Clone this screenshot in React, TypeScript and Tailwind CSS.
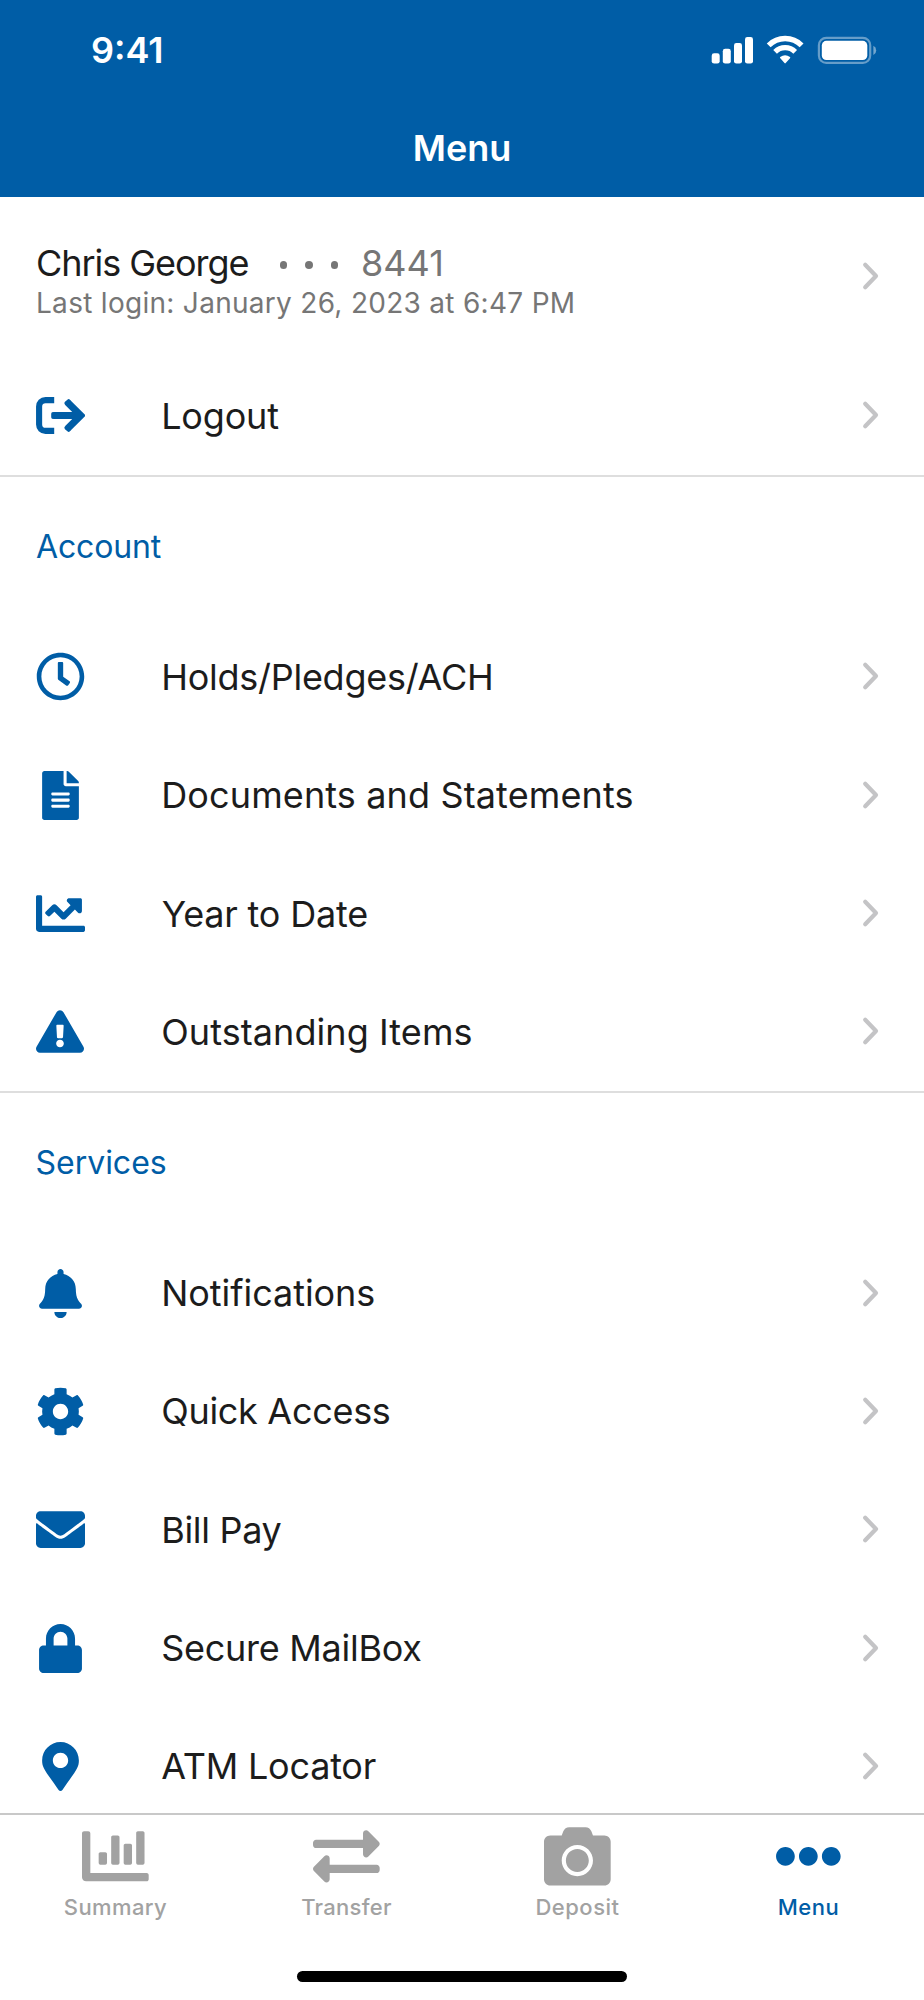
import type { ReactNode } from 'react';
import {
  FaBell,
  FaCamera,
  FaChartBar,
  FaChartLine,
  FaCog,
  FaEllipsisH,
  FaEnvelope,
  FaExchangeAlt,
  FaExclamationTriangle,
  FaFileAlt,
  FaLock,
  FaMapMarkerAlt,
  FaRegClock,
} from 'react-icons/fa';

type Item = { label: string; icon: ReactNode; text?: string };

function LogoutIcon() {
  return (
    <svg viewBox="0 0 49 49" className="size-[49px]" fill="none" stroke="currentColor">
      <path d="M18.2 9.1H9.5C5.8 9.1 3.1 11.8 3.1 15.5V33.5C3.1 37.2 5.8 39.9 9.5 39.9H18.2" strokeWidth="6.1" />
      <path d="M17.2 24.5H42" strokeWidth="7" />
      <path d="M31.4 11.2L44.7 24.5L31.4 37.8" strokeWidth="7" strokeLinejoin="miter" />
      <path d="M17 22.8V26.2M30.2 12.2L32.6 10M30.2 36.8L32.6 39" strokeWidth="3.6" strokeLinecap="round" />
    </svg>
  );
}

function Chevron() {
  return (
    <svg viewBox="0 0 18 30" className="mr-[45.5px] mb-px h-[30px] w-[18px] shrink-0 text-[#c4c4c6]" fill="none" stroke="currentColor">
      <path d="M4.2 3.8L15 15L4.2 26.2" strokeWidth="4.2" strokeLinecap="round" strokeLinejoin="round" />
    </svg>
  );
}

const accountItems: Item[] = [
  { label: 'Holds/Pledges/ACH', icon: <FaRegClock />, text: 'tracking-[-0.26px]' },
  { label: 'Documents and Statements', icon: <FaFileAlt />, text: 'tracking-[0.13px]' },
  { label: 'Year to Date', icon: <FaChartLine />, text: 'pl-[0.5px] tracking-[-0.2px]' },
  { label: 'Outstanding Items', icon: <FaExclamationTriangle className="h-[43px] w-12" />, text: 'tracking-[0.08px]' },
];

const serviceItems: Item[] = [
  { label: 'Notifications', icon: <FaBell />, text: 'tracking-[-0.05px]' },
  { label: 'Quick Access', icon: <FaCog />, text: 'tracking-[-0.3px]' },
  { label: 'Bill Pay', icon: <FaEnvelope />, text: 'tracking-[-0.3px]' },
  { label: 'Secure MailBox', icon: <FaLock />, text: 'tracking-[-0.27px]' },
  { label: 'ATM Locator', icon: <FaMapMarkerAlt />, text: 'tracking-[-0.22px]' },
];

const tabs = [
  { label: 'Summary', icon: <FaChartBar />, active: false, text: 'tracking-[0.4px]' },
  { label: 'Transfer', icon: <FaExchangeAlt />, active: false, text: 'tracking-[0.3px]' },
  { label: 'Deposit', icon: <FaCamera />, active: false, text: 'tracking-[0.5px]' },
  { label: 'Menu', icon: <FaEllipsisH />, active: true, text: 'tracking-[0.5px]' },
];

function Row({ label, icon, text = '' }: Item) {
  return (
    <li className="flex h-[118.3px] items-center pl-[35.7px]">
      <span className="flex w-[49px] shrink-0 justify-center text-[49px] text-[#005da6]">{icon}</span>
      <span className={`ml-[76.5px] flex-1 whitespace-nowrap text-[36px] leading-[44px] text-[#1c1c1c] ${text}`}>{label}</span>
      <Chevron />
    </li>
  );
}

function Section({ title, items, heading }: { title: string; items: Item[]; heading: string }) {
  return (
    <section>
      <h2 className={`flex h-[141px] items-center text-[32px] leading-10 text-[#005da6] ${heading}`}>{title}</h2>
      <ul>
        {items.map((item) => (
          <Row key={item.label} {...item} />
        ))}
      </ul>
    </section>
  );
}

function StatusIcons() {
  return (
    <svg viewBox="0 0 168 30" className="h-[30px] w-[168px]" fill="white">
      <rect x="1.7" y="18.3" width="8" height="10.3" rx="2.4" />
      <rect x="12.8" y="13.8" width="8" height="14.8" rx="2.4" />
      <rect x="24" y="8" width="8" height="20.6" rx="2.4" />
      <rect x="35" y="2" width="8" height="26.6" rx="2.4" />
      <g fill="none" stroke="white">
        <path d="M58.7 10.4A23.2 23.2 0 0 1 91.6 10.4" strokeWidth="5.4" />
        <path d="M65.1 16.8A14.2 14.2 0 0 1 85.2 16.8" strokeWidth="5.2" />
      </g>
      <path d="M70.2 22.1Q75.1 18.2 80 22.1Q80.6 22.7 80 23.3L75.7 28.1Q75.1 28.7 74.5 28.1L70.3 23.3Q69.7 22.7 70.2 22.1Z" />
      <rect x="108.9" y="2.9" width="51.3" height="25" rx="7.4" fill="none" stroke="white" strokeWidth="2.2" strokeOpacity="0.4" />
      <rect x="111.8" y="5.8" width="45.5" height="19.2" rx="4.6" />
      <path d="M163.4 10.8Q166.2 12.2 166.2 15.4Q166.2 18.6 163.4 20Z" fillOpacity="0.45" />
    </svg>
  );
}

export default function App() {
  return (
    <div className="flex h-[2000px] w-[924px] flex-col overflow-hidden bg-white font-[Inter,'Liberation_Sans',sans-serif]">
      <header className="h-[196.5px] shrink-0 bg-[#005da6] text-white">
        <div className="flex h-[100px] items-center justify-between pr-[46px] pl-[91px]">
          <span className="text-[36px] leading-[44px] font-[560]">9:41</span>
          <StatusIcons />
        </div>
        <h1 className="mt-[25.5px] text-center text-[36px] leading-[44px] font-[560]">Menu</h1>
      </header>

      <main className="min-h-0 flex-1 overflow-hidden">
        <section className="border-b-2 border-[#dedede]">
          <div className="flex h-[160px] items-center">
            <div className="flex-1 pt-[10px] pl-[36px]">
              <div className="flex items-center text-[36px] leading-[40px]">
                <span className="w-[243.5px] whitespace-nowrap tracking-[-1.05px] text-[#1c1c1c]">Chris George</span>
                <span className="flex gap-[18.2px] pt-[5px]">
                  <i className="size-[7.5px] rounded-full bg-[#767676]" />
                  <i className="size-[7.5px] rounded-full bg-[#767676]" />
                  <i className="size-[7.5px] rounded-full bg-[#767676]" />
                </span>
                <span className="ml-[22.5px] tracking-[0.1px] text-[#767676]">8441</span>
              </div>
              <p className="mt-[2px] text-[28px] leading-[36px] tracking-[0.29px] text-[#767676]">
                Last login: January 26, 2023 at 6:47 PM
              </p>
            </div>
            <Chevron />
          </div>
          <ul>
            <Row label="Logout" icon={<LogoutIcon />} text="tracking-[-0.18px]" />
          </ul>
        </section>
        <div className="border-b-2 border-[#dedede]">
          <Section title="Account" items={accountItems} heading="pl-[36px] tracking-[-0.15px]" />
        </div>
        <Section title="Services" items={serviceItems} heading="pl-[35.5px] tracking-[-0.02px]" />
      </main>

      <nav className="grid h-[187px] shrink-0 grid-cols-4 content-start border-t-2 border-[#c8c8c8] bg-white pt-[8px]">
        {tabs.map((tab) => (
          <a key={tab.label} className={`flex flex-col items-center ${tab.active ? 'text-[#005da6]' : 'text-[#a2a2a2]'}`}>
            <span className="text-[66.7px]">{tab.icon}</span>
            <span className={`mt-[3px] text-[22px] leading-[28px] font-[460] ${tab.text}`}>{tab.label}</span>
          </a>
        ))}
        <div className="col-span-4 mx-auto mt-[50px] h-[11px] w-[330px] rounded-full bg-black" />
      </nav>
    </div>
  );
}
